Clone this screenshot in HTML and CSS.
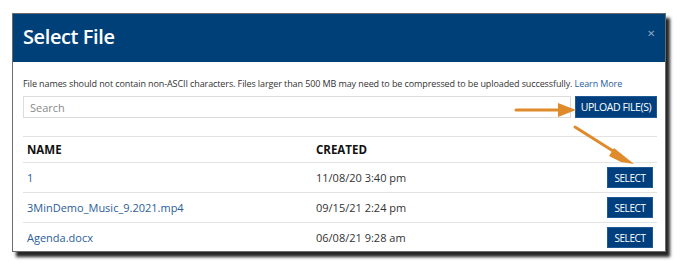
FILE: index.html
```html
<!DOCTYPE html>
<html>
<head>
<meta charset="utf-8">
<link rel="stylesheet" href="styles.css">
</head>
<body>
<div class="stage">
  <div class="dialog">
    <div class="header">
      <h1 class="title">Select File</h1>
      <span class="close">&#x2715;</span>
    </div>
    <div class="body">
      <p class="info">File names should not contain non-ASCII characters. Files larger than 500 MB may need to be compressed to be uploaded successfully. <a class="link">Learn More</a></p>
      <div class="searchrow">
        <div class="search">Search</div>
        <button class="btn upload">UPLOAD FILE(S)</button>
      </div>
      <div class="table">
        <div class="row head">
          <div class="c-name">NAME</div>
          <div class="c-date">CREATED</div>
          <div class="c-act"></div>
        </div>
        <div class="row">
          <div class="c-name"><a class="link">1</a></div>
          <div class="c-date">11/08/20 3:40 pm</div>
          <div class="c-act"><button class="btn sel">SELECT</button></div>
        </div>
        <div class="row">
          <div class="c-name"><a class="link">3MinDemo_Music_9.2021.mp4</a></div>
          <div class="c-date">09/15/21 2:24 pm</div>
          <div class="c-act"><button class="btn sel">SELECT</button></div>
        </div>
        <div class="row">
          <div class="c-name"><a class="link">Agenda.docx</a></div>
          <div class="c-date">06/08/21 9:28 am</div>
          <div class="c-act"><button class="btn sel">SELECT</button></div>
        </div>
      </div>
    </div>
  </div>
  <svg class="arrow a1" width="64" height="16" viewBox="0 0 64 16">
    <line x1="2" y1="8" x2="48" y2="8" stroke="#e08b2b" stroke-width="3" stroke-linecap="round"/>
    <polygon points="44,1 62,8 44,15" fill="#e08b2b"/>
  </svg>
  <svg class="arrow a2" width="64" height="42" viewBox="0 0 64 42">
    <line x1="2" y1="2" x2="48" y2="31" stroke="#e08b2b" stroke-width="3" stroke-linecap="round"/>
    <polygon points="41,23 61,39 48,37 36,31" fill="#e08b2b"/>
  </svg>
</div>
</body>
</html>
```
FILE: styles.css
```css
html, body { margin: 0; padding: 0; background: #fff; }
body { font-family: "Open Sans", "Noto Sans", sans-serif; color: #333; }
.stage { position: relative; width: 688px; height: 274px; overflow: hidden; }
.dialog {
  margin: 13px 0 0 12px;
  width: 654px;
  height: 239px;
  background: #fff;
  border: 1px solid #6b6b6b;
  box-sizing: border-box;
  box-shadow: 4px 5px 3px rgba(0,0,0,0.85);
  overflow: hidden;
}
.header {
  height: 48px;
  box-sizing: border-box;
  background: #004079;
  display: flex;
  align-items: center;
  justify-content: space-between;
  padding: 0 10px 3px 10px;
}
.title { margin: 0; color: #fff; font-size: 20px; font-weight: 600; letter-spacing: -0.4px; }
.close { color: #8ea3bd; font-size: 10px; margin-top: -8px; }
.body { padding: 16px 8px 0 10px; }
.info { margin: 0; font-size: 9px; letter-spacing: -0.1px; line-height: 12px; color: #333; white-space: nowrap; }
.link { color: #2a5d9a; }
.searchrow { display: flex; gap: 4px; margin-top: 6px; height: 22px; }
.search {
  flex: 1;
  border: 1px solid #dcdcdc;
  font-size: 11px;
  color: #8a8a8a;
  padding: 0 6px;
  display: flex; align-items: center;
}
.btn {
  background: #003f7e;
  color: #fff;
  border: 1px solid #1f5a94;
  font-family: "Open Sans", sans-serif;
  padding: 0;
  letter-spacing: -0.4px;
}
.upload { width: 82px; font-size: 10.5px; }
.table { margin-top: 18px; border-top: 1px solid #e2e2e2; }
.row { display: flex; align-items: center; height: 29px; border-bottom: 1px solid #e2e2e2; font-size: 11px; }
.row.head { height: 25px; font-weight: 700; color: #111; font-size: 11.5px; }
.c-name { width: 289px; padding-left: 4px; }
.c-date { flex: 1; }
.c-act { width: 50px; display: flex; justify-content: flex-start; padding-left: 2px; }
.sel { width: 46px; height: 21px; font-size: 10px; }
.arrow { position: absolute; }
.a1 { left: 514px; top: 102px; }
.a2 { left: 573px; top: 125px; }
```
